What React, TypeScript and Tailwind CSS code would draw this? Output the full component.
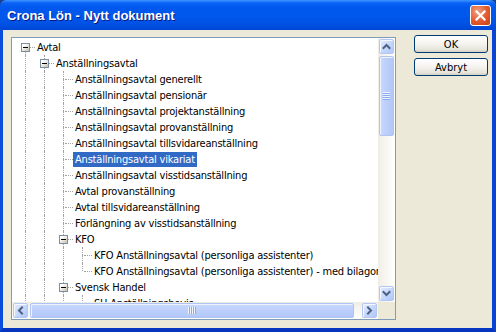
import React from 'react';

type Row = {
  level: number;
  text: string;
  box?: boolean;
  next: boolean;
  guides: boolean[];
  first?: boolean;
  selected?: boolean;
};

const leaf = (text: string, selected = false): Row => ({ level: 2, text, next: true, guides: [true, true], selected });

const rows: Row[] = [
  { level: 0, text: 'Avtal', box: true, next: true, guides: [], first: true },
  { level: 1, text: 'Anställningsavtal', box: true, next: true, guides: [true] },
  leaf('Anställningsavtal generellt'),
  leaf('Anställningsavtal pensionär'),
  leaf('Anställningsavtal projektanställning'),
  leaf('Anställningsavtal provanställning'),
  leaf('Anställningsavtal tillsvidareanställning'),
  leaf('Anställningsavtal vikariat', true),
  leaf('Anställningsavtal visstidsanställning'),
  leaf('Avtal provanställning'),
  leaf('Avtal tillsvidareanställning'),
  leaf('Förlängning av visstidsanställning'),
  { level: 2, text: 'KFO', box: true, next: true, guides: [true, true] },
  { level: 3, text: 'KFO Anställningsavtal (personliga assistenter)', next: true, guides: [true, true, true] },
  { level: 3, text: 'KFO Anställningsavtal (personliga assistenter) - med bilagor', next: false, guides: [true, true, true] },
  { level: 2, text: 'Svensk Handel', box: true, next: true, guides: [true, true] },
  { level: 3, text: 'SH Anställningsbevis', next: true, guides: [true, true, true] },
];

function MinusBox() {
  return (
    <div className="absolute left-[9px] top-[4px] w-[9px] h-[9px] border border-[#7B8FA3] bg-[linear-gradient(135deg,#FFFFFF_25%,#E4E1D8_60%,#C4BFB1)] flex items-center justify-center">
      <div className="w-[5px] h-px bg-black" />
    </div>
  );
}

function TreeRow({ row }: { row: Row }) {
  return (
    <div className="flex h-[16px] shrink-0">
      {row.guides.map((g, i) => (
        <div key={i} className="relative w-[19px] shrink-0">
          {g && <div className="absolute left-[13px] top-0 bottom-0 border-l border-dotted border-[#A0A0A0]" />}
        </div>
      ))}
      <div className="relative w-[23px] shrink-0">
        {!row.first && <div className="absolute left-[13px] top-0 h-[8px] border-l border-dotted border-[#A0A0A0]" />}
        {row.next && <div className="absolute left-[13px] top-[8px] bottom-0 border-l border-dotted border-[#A0A0A0]" />}
        <div className="absolute left-[15px] top-[8px] w-[8px] border-t border-dotted border-[#A0A0A0]" />
        {row.box && <MinusBox />}
      </div>
      <div
        className={
          'mt-[1px] h-[15px] px-[2px] leading-[15px] tracking-[-0.2px] whitespace-nowrap shrink-0 ' +
          (row.selected ? 'bg-[#316AC5] text-white' : 'text-black')
        }
      >
        {row.text}
      </div>
    </div>
  );
}

function Arrow({ dir }: { dir: 'up' | 'down' | 'left' | 'right' }) {
  const d =
    dir === 'up'
      ? 'M1.5 6 L4.5 3 L7.5 6'
      : dir === 'down'
      ? 'M1.5 3 L4.5 6 L7.5 3'
      : dir === 'left'
      ? 'M6 1.5 L3 4.5 L6 7.5'
      : 'M3 1.5 L6 4.5 L3 7.5';
  return (
    <svg width="9" height="9" viewBox="0 0 9 9">
      <path d={d} fill="none" stroke="#4D6185" strokeWidth="2" strokeLinecap="square" />
    </svg>
  );
}

function ScrollBtn({ dir }: { dir: 'up' | 'down' | 'left' | 'right' }) {
  return (
    <div className="w-[17px] h-[17px] p-[1px] shrink-0">
      <div className="w-full h-full rounded-[2px] border border-[#B4C7F4] bg-[linear-gradient(135deg,#E6EEFE,#C4D6FC_55%,#B2C7F6)] shadow-[inset_1px_1px_0_#F4F8FF] flex items-center justify-center">
        <Arrow dir={dir} />
      </div>
    </div>
  );
}

function VScroll() {
  return (
    <div className="w-[17px] h-full flex flex-col bg-[linear-gradient(to_right,#EEEDE5,#F6F5F0_40%,#FEFEFB)] shrink-0">
      <ScrollBtn dir="up" />
      <div className="h-[82px] p-[1px] shrink-0">
        <div className="w-full h-full rounded-[2px] border border-[#B0C4F4] bg-[linear-gradient(to_right,#CAD9FD,#BCCFFB_50%,#B3C8F8)] shadow-[inset_1px_1px_0_#EEF3FF] flex flex-col items-center justify-center gap-[1px]">
          {[0, 1, 2, 3].map((i) => (
            <div key={i} className="w-[7px] h-[1px] bg-[#8CAAF0] shadow-[0_-1px_0_#EEF4FE]" />
          ))}
        </div>
      </div>
      <div className="flex-1" />
      <ScrollBtn dir="down" />
    </div>
  );
}

function HScroll() {
  return (
    <div className="h-[17px] flex shrink-0">
      <div className="w-[366px] flex bg-[linear-gradient(to_bottom,#EEEDE5,#F6F5F0_40%,#FEFEFB)]">
        <ScrollBtn dir="left" />
        <div className="w-[326px] h-[17px] p-[1px] shrink-0">
          <div className="w-full h-full rounded-[2px] border border-[#B0C4F4] bg-[linear-gradient(to_bottom,#CAD9FD,#BCCFFB_50%,#B3C8F8)] shadow-[inset_1px_1px_0_#EEF3FF] flex items-center justify-center gap-[1px]">
            {[0, 1, 2, 3].map((i) => (
              <div key={i} className="w-[1px] h-[7px] bg-[#8CAAF0] shadow-[-1px_0_0_#EEF4FE]" />
            ))}
          </div>
        </div>
        <div className="flex-1" />
        <ScrollBtn dir="right" />
      </div>
      <div className="w-[17px] h-[17px] bg-[#ECE9D8]" />
    </div>
  );
}

function XPButton({ label }: { label: string }) {
  return (
    <button className="w-[74px] h-[18px] rounded-[3px] border border-[#003C74] bg-[linear-gradient(to_bottom,#FFFFFF,#F4F3EE_50%,#E6E3DA_85%,#D6D0C5)] text-[11px] leading-none text-black flex items-center justify-center">
      {label}
    </button>
  );
}

export default function App() {
  return (
    <div className="w-[496px] h-[332px] flex flex-col bg-[#1B3D8F] font-['DejaVu_Sans_Condensed','Liberation_Sans',Arial,sans-serif] text-[11px] select-none">
      <div className="h-[30px] shrink-0 flex items-center pl-[7px] pr-[5px] rounded-t-[6px] bg-[linear-gradient(to_bottom,#3D95FF_0px,#0A62F6_3px,#0058EE_7px,#0057EC_16px,#0052E4_24px,#0046D5_30px)]">
        <div className="flex-1 pt-[2px] text-white font-bold text-[13px] font-['Liberation_Sans',Arial,sans-serif] [text-shadow:1px_1px_0_#0A1883]">Crona Lön - Nytt dokument</div>
        <div className="w-[21px] h-[21px] rounded-[3px] border border-white bg-[radial-gradient(circle_at_35%_30%,#F1A184,#E2592F_55%,#C93F14)] flex items-center justify-center">
          <svg width="11" height="11" viewBox="0 0 11 11">
            <path d="M1.5 1.5 L9.5 9.5 M9.5 1.5 L1.5 9.5" stroke="white" strokeWidth="2.2" strokeLinecap="square" />
          </svg>
        </div>
      </div>
      <div className="flex-1 flex bg-[#ECE9D8] border-l-[3px] border-r-[4px] border-b-[4px] border-l-[#0A4CDB] border-r-[#0A44D4] border-b-[#0636C0]">
        <div className="ml-[8px] mt-[7px] w-[385px] h-[283px] border border-[#7F9DB9] bg-white flex flex-col shrink-0">
          <div className="flex h-[264px]">
            <div className="w-[366px] h-[264px] overflow-hidden pt-[1px] flex flex-col">
              {rows.map((r, i) => (
                <TreeRow key={i} row={r} />
              ))}
            </div>
            <VScroll />
          </div>
          <HScroll />
        </div>
        <div className="ml-[18px] mt-[5px] flex flex-col gap-[5px]">
          <XPButton label="OK" />
          <XPButton label="Avbryt" />
        </div>
      </div>
    </div>
  );
}
